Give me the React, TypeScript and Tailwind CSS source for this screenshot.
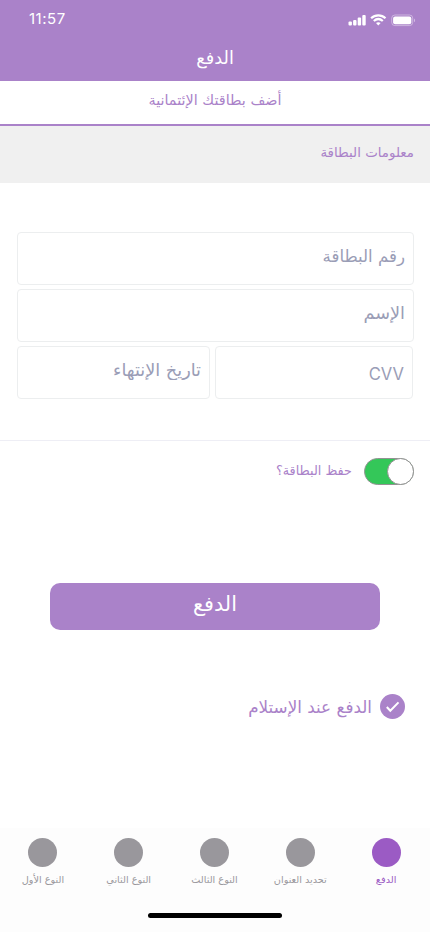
import { useState } from 'react'

const TABS = [
  { id: 'pay', label: 'الدفع' },
  { id: 'address', label: 'تحديد العنوان' },
  { id: 'third', label: 'النوع الثالث' },
  { id: 'second', label: 'النوع الثاني' },
  { id: 'first', label: 'النوع الأول' },
]

function StatusBar() {
  return (
    <div dir="ltr" className="flex h-[39px] items-center justify-between pl-[29px] pr-[14px] text-white">
      <span className="-mt-px font-['Inter',sans-serif] text-[15px] leading-[18px] tracking-[0.5px]">11:57</span>
      <svg width="68" height="14" viewBox="0 0 68 14" fill="currentColor" aria-hidden="true">
        <rect x="0.5" y="8.6" width="3.4" height="4" rx="1" />
        <rect x="5.1" y="6.9" width="3.4" height="5.7" rx="1" />
        <rect x="9.7" y="4.6" width="3.4" height="8" rx="1" />
        <rect x="14.3" y="2" width="3.4" height="10.6" rx="1" />
        <g fill="none" stroke="currentColor" strokeWidth="2.2">
          <path d="M23.1 5.3C27.2 1.4 33.4 1.4 37.5 5.3" />
          <path d="M25.8 8C28.5 5.6 32.1 5.6 34.8 8" />
        </g>
        <path d="M28 10.1c1.3-1.2 3.2-1.2 4.6 0l-2.3 2.4z" />
        <rect x="43.7" y="2" width="21" height="10.6" rx="3.2" fill="none" stroke="currentColor" strokeOpacity="0.4" />
        <rect x="45.1" y="3.4" width="18.2" height="7.8" rx="2" />
        <path d="M66 5.5v3.8c1.3-.6 1.3-3.2 0-3.8z" opacity="0.5" />
      </svg>
    </div>
  )
}

function Field({ placeholder, className }: { placeholder: string; className: string }) {
  return (
    <input
      type="text"
      placeholder={placeholder}
      className={`h-[53px] min-w-0 rounded border border-[#eceeef] bg-white px-2 text-right text-[#9498b3] placeholder-[#9a9db6] focus:outline-none ${className}`}
    />
  )
}

function Switch({ checked, onChange }: { checked: boolean; onChange: (value: boolean) => void }) {
  return (
    <button
      role="switch"
      aria-checked={checked}
      onClick={() => onChange(!checked)}
      className={`flex h-[27px] w-[50px] rounded-full border border-[#929292] ${checked ? 'justify-start bg-[#34c759]' : 'justify-end bg-gray-200'}`}
    >
      <span className="-my-px -mr-px size-[27px] rounded-full border border-[#929292] bg-white" />
    </button>
  )
}

export default function App() {
  const [saveCard, setSaveCard] = useState(true)
  const [activeTab, setActiveTab] = useState('pay')

  return (
    <div dir="rtl" className="flex h-[932px] w-[430px] flex-col overflow-hidden bg-white font-['DejaVu_Sans',sans-serif] text-[#aa82c9]">
      <header className="h-[81px] bg-[#aa82c9] text-white">
        <StatusBar />
        <h1 className="pt-[10px] text-center text-[17.8px] leading-[18px]">الدفع</h1>
      </header>

      <div className="h-[45px] border-b-2 border-[#aa82c9] pt-[10px] text-center text-[14.4px] leading-[18px]">
        أضف بطاقتك الإئتمانية
      </div>
      <div className="h-[57px] bg-[#f0f0f0] pr-4 pt-[18px] text-[13.4px] leading-[18px]">معلومات البطاقة</div>

      <form className="mt-[49px] flex flex-col gap-1 pl-4 pr-4">
        <Field placeholder="رقم البطاقة" className="ml-px pb-[5px] text-[16.6px]" />
        <Field placeholder="الإسم" className="ml-px pb-[5px] text-[17.7px]" />
        <div className="ml-px mr-px flex gap-[5px]">
          <Field placeholder="CVV" className="w-[198px] pt-[2px] font-['Inter',sans-serif] text-[16.6px]" />
          <Field placeholder="تاريخ الإنتهاء" className="w-[193px] pb-[5px] text-[17.7px]" />
        </div>
      </form>

      <div className="mt-[41px] flex h-[45px] items-end gap-3 border-t border-[#eeeef5] pr-4">
        <Switch checked={saveCard} onChange={setSaveCard} />
        <span className="pb-[5px] text-[12.8px] leading-[18px]">حفظ البطاقة؟</span>
      </div>

      <button className="mx-[50px] mt-[98px] h-[47px] shrink-0 rounded-[10px] bg-[#aa82c9] pb-[6px] text-[20.7px] leading-[20px] text-white">
        الدفع
      </button>

      <div className="mt-16 flex h-[25px] items-center gap-2 pr-[25px]">
        <span className="flex size-[25px] items-center justify-center rounded-full bg-[#aa82c9]">
          <svg width="25" height="25" viewBox="0 0 25 25" fill="none" stroke="white" strokeWidth="2" aria-hidden="true">
            <path d="M6.8 13l3.5 3.7L18.5 8.4" />
          </svg>
        </span>
        <span className="text-[16.8px] leading-[18px]">الدفع عند الإستلام</span>
      </div>

      <nav className="mt-[109px] flex h-[104px] flex-col items-center bg-[#fdfdfd] pt-[10px]">
        <div className="grid w-full grid-cols-5 pr-px">
          {TABS.map(tab => (
            <button
              key={tab.id}
              onClick={() => setActiveTab(tab.id)}
              className={`flex flex-col items-center ${tab.id === activeTab ? 'text-[#9b5bc4]' : 'text-[#99979c]'}`}
            >
              <span className="size-[29px] rounded-full bg-current" />
              <span className="mt-[6px] whitespace-nowrap text-[9.7px] leading-[14px]">{tab.label}</span>
            </button>
          ))}
        </div>
        <div className="mt-[26px] h-[5px] w-[134px] rounded-full bg-black" />
      </nav>
    </div>
  )
}
